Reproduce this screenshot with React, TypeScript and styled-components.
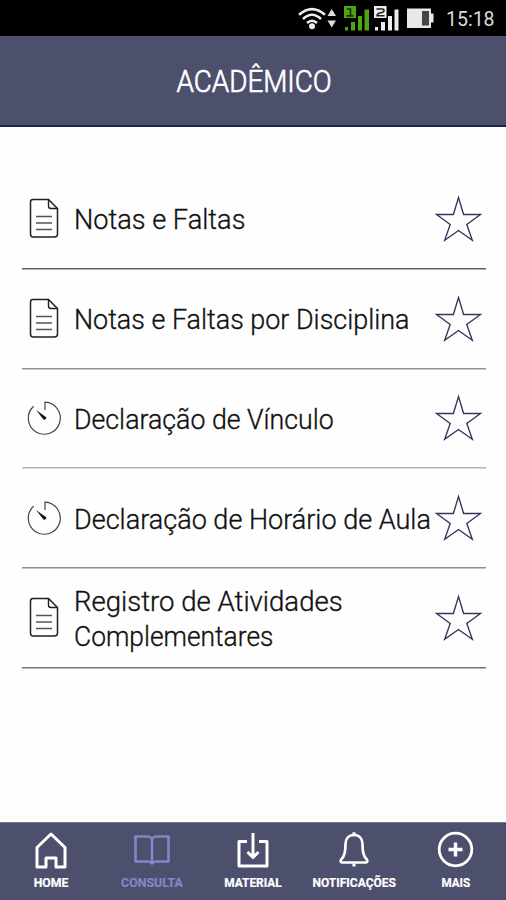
import React from 'react';
import styled, { createGlobalStyle } from 'styled-components';

const GlobalStyle = createGlobalStyle`
  * { box-sizing: border-box; }
  body { margin: 0; background: #fff; font-family: Roboto, "Liberation Sans", sans-serif; }
  svg { display: block; flex: none; overflow: visible; }
`;

const Screen = styled.div`
  display: flex;
  flex-direction: column;
  width: 506px;
  height: 900px;
  overflow: hidden;
  background: #fefefe;
`;

const StatusBar = styled.div`
  display: flex;
  align-items: center;
  justify-content: flex-end;
  flex: none;
  height: 36px;
  padding-right: 11px;
  background: #000;
`;

const Clock = styled.span`
  width: 49px;
  margin-left: 12px;
  padding-top: 3px;
  color: #dcdcdc;
  font-size: 19.5px;
  line-height: 24px;
  white-space: nowrap;
`;

const Header = styled.header`
  display: flex;
  align-items: center;
  justify-content: center;
  flex: none;
  height: 91px;
  background: #4d506d;
  border-bottom: 2px solid #20204c;
`;

const Title = styled.h1`
  margin: 0;
  padding: 1px 0 0 2px;
  color: #fff;
  font-size: 32px;
  font-weight: 300;
  line-height: 40px;
  transform: scaleX(0.87);
  -webkit-text-stroke: 0.7px #fff;
`;

const List = styled.ul`
  flex: 1;
  margin: 0;
  padding: 42px 20px 0 22px;
  list-style: none;
`;

const Row = styled.li<{ $line: string }>`
  display: flex;
  align-items: center;
  height: 99.75px;
  padding: 2px 4px 0 6px;
  border-bottom: 1px solid ${(p) => p.$line};
  box-shadow: 0 0.5px 0 ${(p) => p.$line};
`;

const Label = styled.div`
  flex: 1;
  min-width: 0;
  margin-left: 14px;
  padding-top: 1px;
`;

const Line = styled.span<{ $scale: number }>`
  display: block;
  width: max-content;
  color: #111;
  font-size: 28.5px;
  font-weight: 300;
  line-height: 35px;
  white-space: nowrap;
  transform: scaleX(${(p) => p.$scale});
  transform-origin: left center;
  -webkit-text-stroke: 0.35px #111;
`;

const NavBar = styled.nav`
  display: grid;
  grid-template-columns: repeat(5, 1fr);
  flex: none;
  height: 78px;
  background: #4d506d;
  border-top: 1px solid #77788a;
`;

const NavItem = styled.a<{ $active?: boolean }>`
  display: flex;
  flex-direction: column;
  align-items: center;
  padding-top: 7px;
  color: ${(p) => (p.$active ? '#8188c8' : '#fff')};
`;

const NavLabel = styled.span<{ $scale: number }>`
  margin-top: 6px;
  font-size: 12px;
  font-weight: 700;
  line-height: 14px;
  white-space: nowrap;
  transform: scaleX(${(p) => p.$scale});
  -webkit-text-stroke: 0.2px currentColor;
`;

const StatusIcons = () => (
  <svg width="138" height="36" viewBox="296 0 138 36">
    <g fill="none" stroke="#eee" strokeWidth="2.5">
      <path d="M299 14.8Q312 3.5 325 14.8" />
      <path d="M303 19Q312 10.5 321 19" />
      <path d="M307 23Q312 18.5 317 23" />
    </g>
    <circle cx="312" cy="26.3" r="3" fill="#eee" />
    <path d="M327.5 16L331.7 9L336 16ZM327.5 20.5L331.7 27.5L336 20.5Z" fill="#ddd" />
    <path
      d="M344 6h12v12h-12zM345 27h3v3.500h-3zM351 22h4v8.500h-4zM358 16h4v14.500h-4zM364.500 9.500h4.500v21h-4.500z"
      fill="#51a313"
    />
    <path d="M347 9h3.500v6.500M346.500 15.800h7" fill="none" stroke="#163006" strokeWidth="1.700" />
    <path
      d="M374 6h12.500v12h-12.500zM375 27h3v3.500h-3zM381 22h4v8.500h-4zM388 16h4v14.500h-4zM394.500 9.500h4v21h-4z"
      fill="#eee"
    />
    <path d="M376.500 9h6q1.500 0 1.500 1.500t-1.500 1.800l-3.500 1q-2 .7-2 2.500h7.500" fill="none" stroke="#222" strokeWidth="1.600" />
    <path d="M407 8.500h24v5h2.500v9H431v5.500h-24z" fill="#e8e8e8" />
    <path d="M422 11h7v14.500h-7z" fill="#454545" />
  </svg>
);

const DocumentIcon = () => (
  <svg width="32" height="44" viewBox="0 0 32 44" fill="none" stroke="#202020" strokeWidth="1.400">
    <path d="M5 2.500H20.500L29.500 11.500V37Q29.500 40 26.500 40H5Q2.500 40 2.500 37V5Q2.500 2.500 5 2.500Z" strokeWidth="1.500" />
    <path d="M20.500 2.500V9Q20.500 11.500 23 11.500H29.500" />
    <path d="M8 19.500H24M8 26H24M8 32.500H24" stroke="#555" strokeWidth="1.500" />
  </svg>
);

const TimerIcon = () => (
  <svg width="32" height="44" viewBox="0 0 32 44" fill="none" stroke="#444" strokeWidth="1.200">
    <path d="M17 13V5.200A16 16 0 1 1 5.600 9.300" />
    <path d="M8 13L18.500 20.500Q17.500 23.500 15.500 22.500Z" fill="#111" stroke="none" />
  </svg>
);

const StarIcon = () => (
  <svg width="47" height="47" viewBox="0 0 47 47" fill="none" stroke="#34345c" strokeWidth="1.350">
    <path d="M23.500 1.500L28.600 18.500H45.500L31.800 28.500L37.300 44.300L23.500 34.500L9.700 44.300L15.200 28.500L1.500 18.500H18.400Z" />
  </svg>
);

const navPaths: Record<string, React.ReactNode> = {
  home: <path d="M4 17.500L18 4L32 17.500V37H23V28H13V37H4Z" />,
  book: (
    <path
      d="M18 8.500Q16.500 6.500 13.500 6.500H1.500V31.500H13.500Q16.500 31.500 18 33.500Q19.500 31.500 22.500 31.500H34.500V6.500H22.500Q19.500 6.500 18 8.500V33"
      strokeWidth="2.600"
    />
  ),
  download: (
    <>
      <path d="M12 11.500H4V36H32V11.500H24" />
      <path d="M18 3V27M12.500 22L18 27.500L23.500 22" />
    </>
  ),
  bell: (
    <>
      <path
        d="M18 5C12 5 9.500 9.500 9.500 14.500C9.500 22.500 8 27 5.500 29Q3.500 32 6 32.500H30Q32.500 32 30.500 29C28 27 26.500 22.500 26.500 14.500C26.500 9.500 24 5 18 5Z"
        strokeWidth="2.700"
      />
      <path d="M16.500 3.800H19.500M16.500 35H19.500" />
    </>
  ),
  plus: (
    <>
      <circle cx="18.500" cy="19.500" r="16.300" strokeWidth="2.800" />
      <path d="M18.500 12.500V26.500M11.500 19.500H25.500" strokeWidth="3.400" />
    </>
  ),
};

const NavIcon = ({ name }: { name: string }) => (
  <svg
    width="36"
    height="40"
    viewBox="0 0 36 40"
    fill="none"
    stroke="currentColor"
    strokeWidth="3"
    strokeLinejoin="round"
  >
    {navPaths[name]}
  </svg>
);

const rows = [
  { icon: 'doc', line: '#626262', text: [['Notas e Faltas', 0.953]] },
  { icon: 'doc', line: '#929292', text: [['Notas e Faltas por Disciplina', 0.944]] },
  { icon: 'timer', line: '#b4b4b4', text: [['Declaração de Vínculo', 0.938]] },
  { icon: 'timer', line: '#8c8c8c', text: [['Declaração de Horário de Aula', 0.948]] },
  { icon: 'doc', line: '#747474', text: [['Registro de Atividades', 0.967], ['Complementares', 0.926]] },
] as { icon: string; line: string; text: [string, number][] }[];

const navItems = [
  { icon: 'home', label: 'HOME', scale: 1.02 },
  { icon: 'book', label: 'CONSULTA', scale: 1.03, active: true },
  { icon: 'download', label: 'MATERIAL', scale: 0.99 },
  { icon: 'bell', label: 'NOTIFICAÇÕES', scale: 1 },
  { icon: 'plus', label: 'MAIS', scale: 0.97 },
];

export default function App() {
  return (
    <Screen>
      <GlobalStyle />
      <StatusBar>
        <StatusIcons />
        <Clock>15:18</Clock>
      </StatusBar>
      <Header>
        <Title>ACADÊMICO</Title>
      </Header>
      <List>
        {rows.map((row) => (
          <Row key={row.text[0][0]} $line={row.line}>
            {row.icon === 'doc' ? <DocumentIcon /> : <TimerIcon />}
            <Label>
              {row.text.map(([text, scale]) => (
                <Line key={text} $scale={scale}>{text}</Line>
              ))}
            </Label>
            <StarIcon />
          </Row>
        ))}
      </List>
      <NavBar>
        {navItems.map((item) => (
          <NavItem key={item.label} $active={item.active}>
            <NavIcon name={item.icon} />
            <NavLabel $scale={item.scale}>{item.label}</NavLabel>
          </NavItem>
        ))}
      </NavBar>
    </Screen>
  );
}
